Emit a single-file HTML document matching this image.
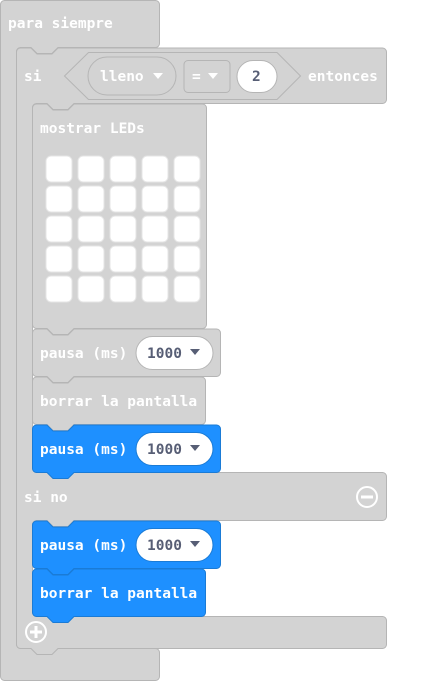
<!DOCTYPE html>
<html><head><meta charset="utf-8"><style>
html,body{margin:0;padding:0;background:#fff;width:439px;height:681px;overflow:hidden}
svg text{font-family:"DejaVu Sans Mono","Liberation Mono",monospace;font-weight:bold;font-size:14.5px;fill:#fff}
.g{fill:#d3d3d3;stroke:#b5b5b5;stroke-width:1}
.b{fill:#1e90ff;stroke:#1a7bd6;stroke-width:1}
.v{fill:#575e75 !important}
</style></head><body>
<svg width="439" height="681" viewBox="0 0 439 681" xmlns="http://www.w3.org/2000/svg">
<path class="g" d="M0.5,4.5 a4,4 0 0 1 4,-4 H155.5 a4,4 0 0 1 4,4 V43.5 a4,4 0 0 1 -4,4 H58 l-6,6 h-15 l-6,-6 H20.5 a4,4 0 0 0 -4,4 V644.5 a4,4 0 0 0 4,4 H155.5 a4,4 0 0 1 4,4 V676.5 a4,4 0 0 1 -4,4 H4.5 a4,4 0 0 1 -4,-4 Z"/>
<text x="8" y="28">para siempre</text>
<path class="g" d="M16.5,52 a4,4 0 0 1 4,-4 H31 l6,6 h15 l6,-6 H382.5 a4,4 0 0 1 4,4 V99.5 a4,4 0 0 1 -4,4 H74 l-6,6 h-15 l-6,-6 H36.5 a4,4 0 0 0 -4,4 V468.5 a4,4 0 0 0 4,4 H382.5 a4,4 0 0 1 4,4 V516.5 a4,4 0 0 1 -4,4 H74 l-6,6 h-15 l-6,-6 H36.5 a4,4 0 0 0 -4,4 V612.5 a4,4 0 0 0 4,4 H382.5 a4,4 0 0 1 4,4 V644.5 a4,4 0 0 1 -4,4 H58 l-6,6 h-15 l-6,-6 H20.5 a4,4 0 0 1 -4,-4 Z"/>
<text x="24" y="81">si</text>
<path class="g" d="M64.5,76 L88.5,52.5 H277 L300.5,76 L277,99.5 H88.5 Z"/>
<rect class="g" x="88" y="57" width="88" height="38" rx="19"/>
<text x="100" y="81">lleno</text>
<path d="M153,73 h10 l-5,6 z" fill="#fff"/>
<rect class="g" x="184" y="60.5" width="46" height="32" rx="4"/>
<text x="192" y="81">=</text>
<path d="M208,73 h10 l-5,6 z" fill="#fff"/>
<rect x="237" y="60.5" width="40" height="32" rx="16" fill="#fff" stroke="#b5b5b5"/>
<text class="v" x="252" y="81">2</text>
<text x="308" y="81">entonces</text>
<path class="g" d="M32.5,108 a4,4 0 0 1 4,-4 H47 l6,6 h15 l6,-6 H202.5 a4,4 0 0 1 4,4 V324.5 a4,4 0 0 1 -4,4 H74 l-6,6 h-15 l-6,-6 H36.5 a4,4 0 0 1 -4,-4 Z"/>
<text x="40" y="133">mostrar LEDs</text>
<g fill="#fff" stroke="#e4e4e4">
<rect x="46" y="156" width="26" height="26" rx="5"/><rect x="78" y="156" width="26" height="26" rx="5"/><rect x="110" y="156" width="26" height="26" rx="5"/><rect x="142" y="156" width="26" height="26" rx="5"/><rect x="174" y="156" width="26" height="26" rx="5"/>
<rect x="46" y="186" width="26" height="26" rx="5"/><rect x="78" y="186" width="26" height="26" rx="5"/><rect x="110" y="186" width="26" height="26" rx="5"/><rect x="142" y="186" width="26" height="26" rx="5"/><rect x="174" y="186" width="26" height="26" rx="5"/>
<rect x="46" y="216" width="26" height="26" rx="5"/><rect x="78" y="216" width="26" height="26" rx="5"/><rect x="110" y="216" width="26" height="26" rx="5"/><rect x="142" y="216" width="26" height="26" rx="5"/><rect x="174" y="216" width="26" height="26" rx="5"/>
<rect x="46" y="246" width="26" height="26" rx="5"/><rect x="78" y="246" width="26" height="26" rx="5"/><rect x="110" y="246" width="26" height="26" rx="5"/><rect x="142" y="246" width="26" height="26" rx="5"/><rect x="174" y="246" width="26" height="26" rx="5"/>
<rect x="46" y="276" width="26" height="26" rx="5"/><rect x="78" y="276" width="26" height="26" rx="5"/><rect x="110" y="276" width="26" height="26" rx="5"/><rect x="142" y="276" width="26" height="26" rx="5"/><rect x="174" y="276" width="26" height="26" rx="5"/>
</g>
<path class="g" d="M32.5,333 a4,4 0 0 1 4,-4 H47 l6,6 h15 l6,-6 H216.5 a4,4 0 0 1 4,4 V372.5 a4,4 0 0 1 -4,4 H74 l-6,6 h-15 l-6,-6 H36.5 a4,4 0 0 1 -4,-4 Z"/>
<text x="40" y="358">pausa (ms)</text>
<rect x="136" y="336.5" width="77" height="33" rx="16.5" fill="#fff" stroke="#b5b5b5"/>
<text class="v" x="147" y="358">1000</text>
<path d="M190,349 h10 l-5,6 z" fill="#575e75"/>
<path class="g" d="M32.5,381 a4,4 0 0 1 4,-4 H47 l6,6 h15 l6,-6 H201.5 a4,4 0 0 1 4,4 V420.5 a4,4 0 0 1 -4,4 H74 l-6,6 h-15 l-6,-6 H36.5 a4,4 0 0 1 -4,-4 Z"/>
<text x="40" y="406">borrar la pantalla</text>
<path class="b" d="M32.5,429 a4,4 0 0 1 4,-4 H47 l6,6 h15 l6,-6 H216.5 a4,4 0 0 1 4,4 V468.5 a4,4 0 0 1 -4,4 H74 l-6,6 h-15 l-6,-6 H36.5 a4,4 0 0 1 -4,-4 Z"/>
<text x="40" y="454">pausa (ms)</text>
<rect x="136" y="432.5" width="77" height="33" rx="16.5" fill="#fff" stroke="#1a7bd6"/>
<text class="v" x="147" y="454">1000</text>
<path d="M190,445 h10 l-5,6 z" fill="#575e75"/>
<text x="24" y="502">si no</text>
<circle cx="367" cy="497" r="10" fill="none" stroke="#fff" stroke-width="2"/>
<rect x="361" y="495.5" width="12" height="3" fill="#fff"/>
<path class="b" d="M32.5,525 a4,4 0 0 1 4,-4 H47 l6,6 h15 l6,-6 H216.5 a4,4 0 0 1 4,4 V564.5 a4,4 0 0 1 -4,4 H74 l-6,6 h-15 l-6,-6 H36.5 a4,4 0 0 1 -4,-4 Z"/>
<text x="40" y="550">pausa (ms)</text>
<rect x="136" y="528.5" width="77" height="33" rx="16.5" fill="#fff" stroke="#1a7bd6"/>
<text class="v" x="147" y="550">1000</text>
<path d="M190,541 h10 l-5,6 z" fill="#575e75"/>
<path class="b" d="M32.5,573 a4,4 0 0 1 4,-4 H47 l6,6 h15 l6,-6 H201.5 a4,4 0 0 1 4,4 V612.5 a4,4 0 0 1 -4,4 H74 l-6,6 h-15 l-6,-6 H36.5 a4,4 0 0 1 -4,-4 Z"/>
<text x="40" y="598">borrar la pantalla</text>
<circle cx="36" cy="632" r="10" fill="none" stroke="#fff" stroke-width="2"/>
<rect x="30" y="630.5" width="12" height="3" fill="#fff"/>
<rect x="34.5" y="626" width="3" height="12" fill="#fff"/>
</svg>
</body></html>
